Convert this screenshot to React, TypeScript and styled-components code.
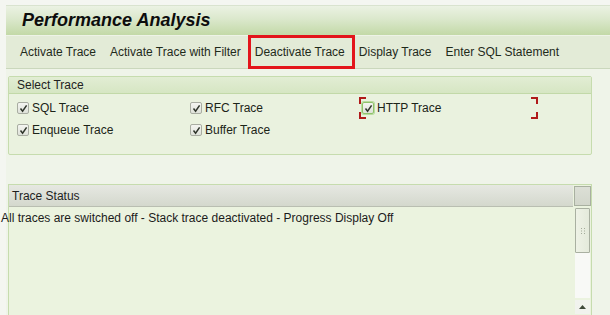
import styled, { createGlobalStyle } from 'styled-components';

const GlobalStyle = createGlobalStyle`
  html, body {
    margin: 0;
    padding: 0;
    background: #f4f6f1;
    font-family: "Liberation Sans", Arial, sans-serif;
    font-size: 12px;
    color: #1e2619;
    overflow: hidden;
  }
`;

const Page = styled.div`
  width: 610px;
  height: 315px;
  padding: 5px 0 0 6px;
  box-sizing: border-box;
  display: flex;
  flex-direction: column;
  overflow: hidden;

  & > * {
    flex-shrink: 0;
  }
`;

const TitleBar = styled.div`
  height: 30px;
  display: flex;
  align-items: center;
  padding-left: 16px;
  background: linear-gradient(to bottom, #ebf2e3 0%, #dbe8cc 45%, #c3d9a7 100%);
  border-top: 1px solid #d9e3cf;
  box-sizing: border-box;
`;

const Title = styled.h1`
  margin: 0;
  font-size: 18px;
  font-weight: bold;
  font-style: italic;
  color: #0d0d0d;
`;

const Toolbar = styled.div`
  height: 34px;
  display: flex;
  align-items: stretch;
  padding-left: 7px;
  background: #e3ebd7;
  border-top: 1px solid #eef3e7;
  border-bottom: 1px solid #cad7bc;
  box-sizing: border-box;
`;

const ToolButton = styled.div<{ $highlighted?: boolean }>`
  position: relative;
  display: flex;
  align-items: center;
  padding: 0 7px;
  white-space: nowrap;
  color: #1f2a1b;

  ${({ $highlighted }) =>
    $highlighted &&
    `
    &::after {
      content: '';
      position: absolute;
      left: 0;
      right: -3px;
      top: -1px;
      bottom: -1px;
      border: 3px solid #e3151b;
    }
  `}
`;

const Content = styled.div`
  padding: 7px 18px 0 2px;
  display: flex;
  flex-direction: column;
  background: #eff4e9;
  flex: 1 0 auto;

  & > * {
    flex-shrink: 0;
  }
`;

const GroupBox = styled.div`
  border: 1px solid #c6dcae;
  border-radius: 2px;
  background: #eaf2df;
`;

const GroupHeader = styled.div`
  height: 16px;
  line-height: 16px;
  padding-left: 8px;
  background: linear-gradient(to bottom, #e2edd4, #d6e6c3);
  border-bottom: 1px solid #c2d9a8;
  color: #222;
`;

const CheckGrid = styled.div`
  display: grid;
  grid-template-columns: 173px 172px 1fr;
  grid-auto-rows: 22px;
  padding: 3px 0 13px 8px;
`;

const CheckCell = styled.label`
  position: relative;
  display: flex;
  align-items: center;
  gap: 3px;
  color: #1c2418;
`;

const Box = styled.span<{ $focused?: boolean }>`
  width: 12px;
  height: 12px;
  box-sizing: border-box;
  display: flex;
  align-items: center;
  justify-content: center;
  background: linear-gradient(to bottom, #f4f5f1, #dfe2da);
  border: 1px solid ${({ $focused }) => ($focused ? '#8fc26b' : '#a9ada2')};
  border-radius: 2px;
  ${({ $focused }) => $focused && 'box-shadow: 0 0 0 1px #b9dc9f;'}
`;

const FocusCorner = styled.span<{ $v: 'top' | 'bottom'; $h: 'left' | 'right' }>`
  position: absolute;
  width: 5px;
  height: 5px;
  ${({ $v }) => `${$v}: 0;`}
  ${({ $h }) => ($h === 'left' ? 'left: -3px;' : 'left: 169px;')}
  border-color: #b01a1a;
  border-style: solid;
  border-width: 0;
  ${({ $v }) => ($v === 'top' ? 'border-top-width: 2px;' : 'border-bottom-width: 2px;')}
  ${({ $h }) => ($h === 'left' ? 'border-left-width: 2px;' : 'border-right-width: 2px;')}
`;

const StatusBox = styled.div`
  margin-top: 29px;
  height: 140px;
  border: 1px solid #c6dcae;
  background: #ebf3df;
  display: grid;
  grid-template-columns: 1fr 17px;
  column-gap: 1px;
`;

const StatusMain = styled.div`
  display: flex;
  flex-direction: column;
`;

const StatusHeader = styled.div`
  height: 21px;
  line-height: 22px;
  padding-left: 3px;
  background: linear-gradient(to bottom, #e6e8e2, #d4d8cd);
  border-bottom: 1px solid #b9beb1;
  color: #1e1e1e;
`;

const StatusText = styled.div`
  margin-left: -8px;
  padding-top: 3px;
  line-height: 16px;
  white-space: nowrap;
  color: #1b1b1b;
`;

const ScrollBar = styled.div`
  display: flex;
  flex-direction: column;
  padding-top: 1px;
`;

const ScrollCorner = styled.div`
  height: 20px;
  box-sizing: border-box;
  border: 1px solid #a9b0a1;
  background: linear-gradient(to bottom, #dcdfd6, #d2d6cb);
`;

const ScrollThumb = styled.div`
  margin: 2px 1px 0;
  height: 45px;
  box-sizing: border-box;
  border: 1px solid #a9b0a1;
  border-radius: 1px;
  background: linear-gradient(to right, #eef2e6, #e4eadb);
  display: flex;
  align-items: center;
  justify-content: center;
`;

const ScrollTrack = styled.div`
  height: 45px;
  background: #f8f9f6;
  margin: 0 1px;
`;

const ScrollArrow = styled.div`
  margin: 2px 1px 0;
  height: 14px;
  background: #f1f3ee;
  display: flex;
  align-items: center;
  justify-content: center;
`;

const Check = ({ focused }: { focused?: boolean }) => (
  <Box $focused={focused}>
    <svg width="9" height="9" viewBox="0 0 9 9">
      <path d="M1.5 4.5 L3.6 7.2 L7.6 1.4" fill="none" stroke="#2e342a" strokeWidth="1.5" />
    </svg>
  </Box>
);

const traces = [
  { label: 'SQL Trace' },
  { label: 'RFC Trace' },
  { label: 'HTTP Trace', focused: true },
  { label: 'Enqueue Trace' },
  { label: 'Buffer Trace' },
];

const toolItems = [
  'Activate Trace',
  'Activate Trace with Filter',
  'Deactivate Trace',
  'Display Trace',
  'Enter SQL Statement',
];

export default function App() {
  return (
    <>
      <GlobalStyle />
      <Page>
        <TitleBar>
          <Title>Performance Analysis</Title>
        </TitleBar>
        <Toolbar>
          {toolItems.map((t) => (
            <ToolButton key={t} $highlighted={t === 'Deactivate Trace'}>
              {t}
            </ToolButton>
          ))}
        </Toolbar>
        <Content>
          <GroupBox>
            <GroupHeader>Select Trace</GroupHeader>
            <CheckGrid>
              {traces.map((t) => (
                <CheckCell key={t.label}>
                  <Check focused={t.focused} />
                  {t.label}
                  {t.focused && (
                    <>
                      <FocusCorner $v="top" $h="left" />
                      <FocusCorner $v="top" $h="right" />
                      <FocusCorner $v="bottom" $h="left" />
                      <FocusCorner $v="bottom" $h="right" />
                    </>
                  )}
                </CheckCell>
              ))}
            </CheckGrid>
          </GroupBox>
          <StatusBox>
            <StatusMain>
              <StatusHeader>Trace Status</StatusHeader>
              <StatusText>
                All traces are switched off - Stack trace deactivated - Progress Display Off
              </StatusText>
            </StatusMain>
            <ScrollBar>
              <ScrollCorner />
              <ScrollThumb>
                <svg width="4" height="6" viewBox="0 0 4 6">
                  <g fill="#a3ab99">
                    <rect x="0" y="0" width="1" height="1" />
                    <rect x="3" y="0" width="1" height="1" />
                    <rect x="0" y="2.5" width="1" height="1" />
                    <rect x="3" y="2.5" width="1" height="1" />
                    <rect x="0" y="5" width="1" height="1" />
                    <rect x="3" y="5" width="1" height="1" />
                  </g>
                </svg>
              </ScrollThumb>
              <ScrollTrack />
              <ScrollArrow>
                <svg width="7" height="4" viewBox="0 0 7 4">
                  <path d="M0 4 L3.5 0 L7 4 Z" fill="#3f4a3a" />
                </svg>
              </ScrollArrow>
            </ScrollBar>
          </StatusBox>
        </Content>
      </Page>
    </>
  );
}
